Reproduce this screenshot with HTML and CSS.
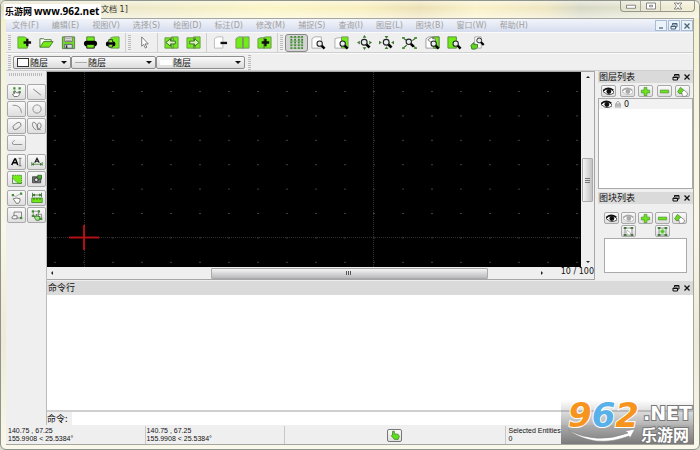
FILE: index.html
```html
<!DOCTYPE html>
<html lang="zh-CN">
<head>
  <meta charset="UTF-8">
  <meta name="viewport" content="width=device-width, initial-scale=1.0">
  <title>文档 1</title>
  <link rel="stylesheet" href="styles.css">
</head>
<body>
  <svg class="sprite" aria-hidden="true">
    <symbol id="lens" viewBox="0 0 16 16"><path d="M9.500 9.500L14 14" stroke="#000" stroke-width="3.500"/><circle cx="7" cy="7" r="3.800" fill="#e8eef0" stroke="#222" stroke-width="1.500"/></symbol>
    <symbol id="new" viewBox="0 0 16 16"><path d="M1 2h7l3 2v10H1z" fill="#72ec16" stroke="#6a9a4a"/><path d="M7 8h8M11 4v8" stroke="#111" stroke-width="2.500"/></symbol>
    <symbol id="open" viewBox="0 0 16 16"><path d="M1 13V4h4l1 1h7v2" fill="#fff" stroke="#4d7a35"/><path d="M1 13l4-6h10l-4 6z" fill="#72ec16" stroke="#4d7a35"/></symbol>
    <symbol id="save" viewBox="0 0 16 16"><path d="M1.500 2h13v12.500h-13z" fill="#72d827" stroke="#5d7d4d"/><path d="M4 2h8v5H4z" fill="#eee" stroke="#777"/><path d="M5 4h6M5 6h6" stroke="#999"/><path d="M4 10h8v4H4z" fill="#ddd" stroke="#567"/><path d="M6 11v3" stroke="#333" stroke-width="1.500"/></symbol>
    <symbol id="print" viewBox="0 0 16 16"><path d="M4 2h8v5H4z" fill="#72ec16" stroke="#4d7a35"/><rect x="1" y="6" width="14" height="6" rx="3"/><path d="M4 10h8v4H4z" fill="#72ec16" stroke="#111"/></symbol>
    <symbol id="preview" viewBox="0 0 16 16"><path d="M6 3l3-1h6v12H6z" fill="#72ec16" stroke="#789966"/><rect x="1" y="7" width="10" height="5" rx="2"/><path d="M4 5h4v3H4zM4 10h4v3H4z" fill="#8e3" stroke="#333"/></symbol>
    <symbol id="cursor" viewBox="0 0 16 16"><path d="M5 2v10l2-2 2 4 1.500-1-2-3.500H12z" fill="#fff" stroke="#777"/></symbol>
    <symbol id="undo" viewBox="0 0 16 16"><path d="M1 3h9v11H1zM8 2h7v12H8z" fill="#72ec16" stroke="#699650"/><path d="M2 8l5-4v2.500h5v3H7V12z" fill="#d8f5b8" stroke="#3f6630"/></symbol>
    <symbol id="redo" viewBox="0 0 16 16"><path d="M1 3h9v11H1zM8 2h7v12H8z" fill="#72ec16" stroke="#699650"/><path d="M14 8L9 4v2.500H4v3h5V12z" fill="#d8f5b8" stroke="#3f6630"/></symbol>
    <symbol id="cut" viewBox="0 0 16 16"><path d="M1.500 4l3-2h6v12h-9z" fill="#fff" stroke="#bbb"/><path d="M8 8.500h7" stroke="#111" stroke-width="2.500"/></symbol>
    <symbol id="copy" viewBox="0 0 16 16"><path d="M1 4l3-2h5v12H1zM8 3l2-1h5v12H8z" fill="#72ec16" stroke="#799666"/></symbol>
    <symbol id="paste" viewBox="0 0 16 16"><path d="M1 4l3-1h4v11H1zM7 3l2-1h6v12H7z" fill="#72ec16" stroke="#699650"/><path d="M5 8h8M9 4v8" stroke="#111" stroke-width="2.500"/></symbol>
    <symbol id="grid" viewBox="0 0 16 16"><path d="M2.500 1v14M6.500 1v14M10.500 1v14M14 1v14" stroke="#43853a" stroke-width="2" stroke-dasharray="2 1"/><path d="M1 2.500h14M1 6.500h14M1 10.500h14M1 14h14" stroke="#5ea34c" stroke-width=".7"/></symbol>
    <symbol id="redraw" viewBox="0 0 16 16"><path d="M1 4l3-2h7v12H1z" fill="#fff" stroke="#aaa"/><use href="#lens" x="4" y="4" width="12" height="12"/></symbol>
    <symbol id="zoomwin" viewBox="0 0 16 16"><path d="M1 4l3-1h4v11H1z" fill="#fff" stroke="#aaa"/><path d="M8 2h7v12H8z" fill="#72ec16" stroke="#799666"/><use href="#lens" x="4" y="4" width="12" height="12"/></symbol>
    <symbol id="zoomin" viewBox="0 0 16 16"><path d="M8 0l2 3H6zM8 16l2-3H6zM0 8l3-2v4zM16 8l-3-2v4z" fill="#3d7d30"/><use href="#lens" x="2" y="2" width="13" height="13"/></symbol>
    <symbol id="zoomout" viewBox="0 0 16 16"><path d="M6 1h4L8 4zM6 15h4l-2-3zM0 6v4l3-2zM16 6v4l-3-2z" fill="#3d7d30"/><use href="#lens" x="2" y="2" width="13" height="13"/></symbol>
    <symbol id="zoomauto" viewBox="0 0 16 16"><path d="M1 3l4 3M15 3l-4 3M1 14l4-3M15 14l-4-3" stroke="#36642c" stroke-width="1.200"/><path d="M0 3h3M13 3h3M0 14h3M13 14h3" stroke="#4b923a" stroke-width="2"/><use href="#lens" x="2" y="2" width="12" height="12"/></symbol>
    <symbol id="zoomprev" viewBox="0 0 16 16"><path d="M1 4l3-2h11v12H1z" fill="#fff" stroke="#999"/><path d="M9 2h6v12H9z" fill="#72ec16" stroke="#567d42"/><path d="M3 5l5-3v2h3v3H8v2z" fill="#fff" stroke="#777"/><use href="#lens" x="4" y="4" width="12" height="12"/></symbol>
    <symbol id="zoomsel" viewBox="0 0 16 16"><path d="M1 2h9v12H1z" fill="#72ec16" stroke="#5c8b40"/><use href="#lens" x="4" y="4" width="12" height="12"/></symbol>
    <symbol id="zoompan" viewBox="0 0 16 16"><path d="M5 2h7v12H5z" fill="#fff" stroke="#aaa"/><path d="M1 11l3-3v2h4v3l-2 2H2z" fill="#61d51a" stroke="#3c792b"/><use href="#lens" x="5" y="1" width="11" height="11"/></symbol>
    <symbol id="points" viewBox="0 0 16 16"><path d="M3 3h3M10 3h3M10 8h3M3 8h2" stroke="#438f35" stroke-width="3"/><path d="M4 14l-2-3 3-1V6l2 3h4v3l-2 2z" fill="#fff" stroke="#555"/></symbol>
    <symbol id="line" viewBox="0 0 16 16"><path d="M3 4l10 8" stroke="#777" stroke-width="1.200"/></symbol>
    <symbol id="arc" viewBox="0 0 16 16"><path d="M2 3q11-1 12 10" fill="none" stroke="#777"/></symbol>
    <symbol id="circle" viewBox="0 0 16 16"><circle cx="8" cy="8" r="5.500" fill="none" stroke="#777"/></symbol>
    <symbol id="ellipse" viewBox="0 0 16 16"><ellipse cx="8" cy="8" rx="6" ry="3.500" transform="rotate(-35 8 8)" fill="none" stroke="#666"/></symbol>
    <symbol id="spline" viewBox="0 0 16 16"><path d="M7 13C2 12 0 2 4 3s4 7 5 10c5-1 6-9 2-9S8 13 13 13" fill="none" stroke="#666"/></symbol>
    <symbol id="polyline" viewBox="0 0 16 16"><path d="M5 4L2 7q-1 3 2 3h11" fill="none" stroke="#777"/></symbol>
    <symbol id="text" viewBox="0 0 16 16"><path d="M1 12L5 4h1l3 8M3 9h5" fill="none" stroke="#000" stroke-width="2"/><path d="M10 3h4M12 3v10M10 13h4" stroke="#555"/></symbol>
    <symbol id="dim" viewBox="0 0 16 16"><path d="M5 9l3-6 3 6M6 7h4" fill="none" stroke="#111" stroke-width="1.500"/><path d="M1 8v5M15 8v5M1 11h14" stroke="#3d7531"/><path d="M1 11l3-2v4zM15 11l-3-2v4z" fill="#3d7531"/></symbol>
    <symbol id="hatch" viewBox="0 0 16 16"><path d="M2 3h12v11q-7 0-12-8z" fill="#72ec16" stroke="#3b752d" stroke-dasharray="2 1"/><path d="M2 6v8h12" fill="none" stroke="#3b752d"/></symbol>
    <symbol id="image" viewBox="0 0 16 16"><path d="M2 5h11v8H2z" fill="#777" stroke="#333"/><circle cx="7" cy="9" r="2.500" fill="#ddd" stroke="#111"/><path d="M9 3h5v5H9z" fill="#55a63b" stroke="#245c1b"/></symbol>
    <symbol id="modify" viewBox="0 0 16 16"><path d="M2 4l4 2 7-4" fill="none" stroke="#999"/><path d="M1 4h3M12 2h3" stroke="#438f35" stroke-width="3"/><path d="M5 12l-2-3 4-1 5 1v3l-2 3H7z" fill="#fff" stroke="#555"/></symbol>
    <symbol id="measure" viewBox="0 0 16 16"><path d="M2 1v6M14 1v6M2 4h12" stroke="#28601d"/><path d="M2 4l3-2v4zM14 4l-3-2v4z" fill="#28601d"/><path d="M1 8h14v6H1z" fill="#72ec16" stroke="#3e7b2a"/><path d="M4 8v3M8 8v3M12 8v3" stroke="#2d5a22"/></symbol>
    <symbol id="block" viewBox="0 0 16 16"><path d="M4 10V4h10v8H8" fill="none" stroke="#666"/><path d="M12 12h3" stroke="#438f35" stroke-width="3"/><path d="M1 12l2-3h5v4H3z" fill="#fff" stroke="#555"/></symbol>
    <symbol id="select" viewBox="0 0 16 16"><path d="M3 3h7v7H3zM8 7h6v6H8" fill="none" stroke="#777"/><path d="M1 3h3M9 3h3M1 9h3M12 13h3" stroke="#438f35" stroke-width="3"/><path d="M5 12l-1-3 3 1V7l2 3h3l-1 5H7z" fill="#9e7" stroke="#345b2a"/></symbol>
    <symbol id="eye" viewBox="0 0 16 16"><path d="M0 8q7-7 15-1l1 3q-8 5-13 0z" fill="#fff" stroke="currentColor"/><path d="M0 7q7-7 15-1" fill="none" stroke="currentColor" stroke-width="2"/><circle cx="8.500" cy="8" r="3.500" fill="currentColor"/></symbol>
    <symbol id="plus" viewBox="0 0 16 16"><path d="M6 2h4v4h4v4h-4v4H6v-4H2V6h4z" fill="#6ce51b" stroke="#498f2c"/></symbol>
    <symbol id="minus" viewBox="0 0 16 16"><path d="M2 6h12v4H2z" fill="#6ce51b" stroke="#498f2c"/></symbol>
    <symbol id="edit" viewBox="0 0 16 16"><path d="M1 8l4-6 5 4-2 5H3z" fill="#66d91f" stroke="#427e2a"/><path d="M7 9l3-3 5 4v3l-3 2H8z" fill="#fff" stroke="#777"/></symbol>
    <symbol id="blockedit" viewBox="0 0 16 16"><path d="M3 3h10v10H3z" fill="#fff" stroke="#666"/><path d="M1 3h4M11 3h4M1 13h4M11 13h4" stroke="#47783d" stroke-width="3"/><path d="M5 10l1-4 5 4v3H8z" fill="#fff" stroke="#999"/></symbol>
    <symbol id="blockinsert" viewBox="0 0 16 16"><path d="M3 3h10v10H3z" fill="#dfd" stroke="#666"/><path d="M1 3h4M11 3h4M1 13h4M11 13h4" stroke="#47783d" stroke-width="3"/><path d="M5 8h6M8 5v6" stroke="#59bd2b" stroke-width="3"/></symbol>
    <symbol id="lock" viewBox="0 0 16 16"><path d="M5 8V5q3-5 6 0v3" fill="none" stroke="#aaa" stroke-width="2"/><path d="M2 7h12v8H2z" fill="#aaa"/><path d="M3 10h10M3 13h10" stroke="#ddd"/></symbol>
    <symbol id="hand" viewBox="0 0 16 16"><path d="M4 8V2h3v4l6 1 2 3-2 5H7L2 9z" fill="#5ee01a" stroke="#326d24"/></symbol>
    <symbol id="float" viewBox="0 0 16 16"><path d="M5 6V3h9v7h-3M5 4h9" fill="none" stroke="currentColor" stroke-width="2"/><path d="M2 8h9v6H2zM2 9h9" fill="none" stroke="currentColor" stroke-width="2"/></symbol>
    <symbol id="close" viewBox="0 0 16 16"><path d="M3 3l10 10M13 3L3 13" stroke="currentColor" stroke-width="2.500"/></symbol>
    <symbol id="min" viewBox="0 0 16 16"><path d="M4 12h8" stroke="currentColor" stroke-width="2.500"/></symbol>
  </svg>

  <div class="window">
    <header class="titlebar">
      <h1>文档 1]</h1>
      <div class="win-buttons">
        <button aria-label="最小化"><svg viewBox="0 0 16 10"><path d="M2 4h12v4H2z" fill="#fff" stroke="#666"/></svg></button>
        <button aria-label="最大化"><svg viewBox="0 0 16 10"><path d="M2 1h12v8H2zM6 4h4v2H6z" fill="#fff" stroke="#666"/></svg></button>
        <button class="win-close" aria-label="关闭"><svg viewBox="0 0 16 10"><path d="M3 1h4l1 2 1-2h4l-3 4 3 4H9L8 7 7 9H3l3-4z" fill="#fff" stroke="#666"/></svg></button>
      </div>
    </header>

    <div class="client">
      <nav class="menubar">
        <a href="#">文件(F)</a><a href="#">编辑(E)</a><a href="#">视图(V)</a><a href="#">选择(S)</a><a href="#">绘图(D)</a><a href="#">标注(D)</a><a href="#">修改(M)</a><a href="#">捕捉(S)</a><a href="#">查询(I)</a><a href="#">图层(L)</a><a href="#">图块(B)</a><a href="#">窗口(W)</a><a href="#">帮助(H)</a>
        <div class="mdi">
          <button aria-label="最小化"><svg><use href="#min"/></svg></button>
          <button aria-label="还原"><svg><use href="#float"/></svg></button>
          <button aria-label="关闭"><svg><use href="#close"/></svg></button>
        </div>
      </nav>

      <div class="toolbar main-tools">
        <span class="grip"></span>
        <button aria-label="新建"><svg><use href="#new"/></svg></button>
        <button aria-label="打开"><svg><use href="#open"/></svg></button>
        <button aria-label="保存"><svg><use href="#save"/></svg></button>
        <button aria-label="打印"><svg><use href="#print"/></svg></button>
        <button aria-label="打印预览"><svg><use href="#preview"/></svg></button>
        <span class="sep"></span>
        <span class="grip"></span>
        <button aria-label="选择"><svg><use href="#cursor"/></svg></button>
        <span class="sep"></span>
        <button aria-label="撤销"><svg><use href="#undo"/></svg></button>
        <button aria-label="重做"><svg><use href="#redo"/></svg></button>
        <span class="sep"></span>
        <button aria-label="剪切"><svg><use href="#cut"/></svg></button>
        <button aria-label="复制"><svg><use href="#copy"/></svg></button>
        <button aria-label="粘贴"><svg><use href="#paste"/></svg></button>
        <span class="sep"></span>
        <span class="grip"></span>
        <div class="view-tools">
          <button class="pressed" aria-label="网格"><svg><use href="#grid"/></svg></button>
          <button aria-label="重画"><svg><use href="#redraw"/></svg></button>
          <button aria-label="窗口缩放"><svg><use href="#zoomwin"/></svg></button>
          <button aria-label="放大"><svg><use href="#zoomin"/></svg></button>
          <button aria-label="缩小"><svg><use href="#zoomout"/></svg></button>
          <button aria-label="自动缩放"><svg><use href="#zoomauto"/></svg></button>
          <button aria-label="上一视图"><svg><use href="#zoomprev"/></svg></button>
          <button aria-label="缩放选择"><svg><use href="#zoomsel"/></svg></button>
          <button aria-label="平移"><svg><use href="#zoompan"/></svg></button>
        </div>
      </div>

      <div class="toolbar pen-tools">
        <span class="grip"></span>
        <label class="combo combo-color"><span class="swatch box"></span><select aria-label="颜色"><option>随层</option></select><i class="arrow"></i></label>
        <label class="combo combo-width"><span class="swatch rule"></span><select aria-label="线宽"><option>随层</option></select><i class="arrow"></i></label>
        <label class="combo combo-type"><span class="swatch blank"></span><select aria-label="线型"><option>随层</option></select><i class="arrow"></i></label>
        <span class="grip"></span>
      </div>

      <div class="work">
        <aside class="toolbox">
          <div class="grip-h"></div>
          <div class="tools">
            <button aria-label="点"><svg><use href="#points"/></svg></button>
            <button aria-label="直线"><svg><use href="#line"/></svg></button>
            <button aria-label="圆弧"><svg><use href="#arc"/></svg></button>
            <button aria-label="圆"><svg><use href="#circle"/></svg></button>
            <button aria-label="椭圆"><svg><use href="#ellipse"/></svg></button>
            <button aria-label="样条"><svg><use href="#spline"/></svg></button>
            <button aria-label="多段线"><svg><use href="#polyline"/></svg></button>
          </div>
          <div class="tools">
            <button aria-label="文字"><svg><use href="#text"/></svg></button>
            <button aria-label="标注"><svg><use href="#dim"/></svg></button>
            <button aria-label="填充"><svg><use href="#hatch"/></svg></button>
            <button aria-label="图像"><svg><use href="#image"/></svg></button>
          </div>
          <div class="tools">
            <button aria-label="修改"><svg><use href="#modify"/></svg></button>
            <button aria-label="测量"><svg><use href="#measure"/></svg></button>
            <button aria-label="图块"><svg><use href="#block"/></svg></button>
            <button aria-label="选择工具"><svg><use href="#select"/></svg></button>
          </div>
        </aside>

        <div class="center">
          <div class="upper">
            <main class="drawing">
              <svg class="canvas" aria-label="绘图区">
                <defs>
                  <pattern id="dots" x="7" y="19" width="29" height="24.400" patternUnits="userSpaceOnUse"><rect width="2" height="1" fill="#404040"/></pattern>
                </defs>
                <rect width="100%" height="100%" fill="url(#dots)"/>
                <path class="axes" d="M37.500 0v400M326.500 0v400M0 165.500h1600"/>
                <path class="cross" d="M22 165.500h30M37 153v25"/>
              </svg>
              <div class="vscroll"><i class="tri up"></i><span class="thumb"></span><i class="tri down"></i></div>
              <div class="bottom">
                <div class="hscroll"><i class="tri left"></i><span class="thumb"></span><i class="tri right"></i></div>
                <span class="ratio">10 / 100</span>
              </div>
            </main>

            <aside class="docks">
              <section class="dock">
                <h2 class="dock-title">图层列表<button aria-label="浮动"><svg><use href="#float"/></svg></button><button aria-label="关闭"><svg><use href="#close"/></svg></button></h2>
                <div class="dock-tools layer-tools">
                  <button aria-label="全部显示"><svg><use href="#eye"/></svg></button>
                  <button class="dim" aria-label="全部隐藏"><svg><use href="#eye"/></svg></button>
                  <button aria-label="添加图层"><svg><use href="#plus"/></svg></button>
                  <button aria-label="删除图层"><svg><use href="#minus"/></svg></button>
                  <button aria-label="编辑图层"><svg><use href="#edit"/></svg></button>
                </div>
                <ul class="layers">
                  <li><svg class="vis"><use href="#eye"/></svg><svg class="lock"><use href="#lock"/></svg>0</li>
                </ul>
              </section>
              <section class="dock">
                <h2 class="dock-title">图块列表<button aria-label="浮动"><svg><use href="#float"/></svg></button><button aria-label="关闭"><svg><use href="#close"/></svg></button></h2>
                <div class="dock-tools block-tools">
                  <button aria-label="全部显示"><svg><use href="#eye"/></svg></button>
                  <button class="dim" aria-label="全部隐藏"><svg><use href="#eye"/></svg></button>
                  <button aria-label="添加图块"><svg><use href="#plus"/></svg></button>
                  <button aria-label="删除图块"><svg><use href="#minus"/></svg></button>
                  <button aria-label="重命名图块"><svg><use href="#edit"/></svg></button>
                  <button class="col2" aria-label="编辑图块"><svg><use href="#blockedit"/></svg></button>
                  <button class="col4" aria-label="插入图块"><svg><use href="#blockinsert"/></svg></button>
                </div>
                <div class="blocks"></div>
              </section>
            </aside>
          </div>

          <section class="command">
            <h2 class="dock-title">命令行<button aria-label="浮动"><svg><use href="#float"/></svg></button><button aria-label="关闭"><svg><use href="#close"/></svg></button></h2>
            <div class="history"></div>
            <div class="prompt"><label for="cmd">命令:</label><input id="cmd" type="text"></div>
          </section>
        </div>
      </div>

      <footer class="status">
        <p>140.75 , 67.25<br>155.9908 &lt; 25.5384°</p>
        <p>140.75 , 67.25<br>155.9908 &lt; 25.5384°</p>
        <div class="mouse"><button aria-label="鼠标"><svg><use href="#hand"/></svg></button></div>
        <p>Selected Entities<br>0</p>
      </footer>
    </div>

    <div class="site-label">乐游网 <b>www.962.net</b></div>
    <div class="site-logo">
      <svg class="swoosh" viewBox="0 0 133 44"><path d="M7 30q28 15 60 3l-3-2 10-2-5 9-1-2Q34 49 7 30z" fill="#fff" stroke="#888" stroke-width=".6"/></svg>
      <span class="num"><i>9</i><i class="blue">6</i><i>2</i></span>
      <span class="net">.NET</span>
      <span class="cn">乐游网</span>
    </div>
  </div>
</body>
</html>
```

FILE: styles.css
```css
* {
  box-sizing: border-box;
}
body {
  margin: 0;
  height: 100vh;
  overflow: hidden;
  background: #d9d9cf;
  font-family: "DejaVu Sans", "Noto Sans CJK SC", sans-serif;
  font-size: 8px;
  color: #111;
}
button {
  display: flex;
  align-items: center;
  justify-content: center;
  padding: 0;
  margin: 0;
  border: none;
  background: none;
  color: inherit;
}
h1, h2, p, ul {
  margin: 0;
  padding: 0;
  font-weight: normal;
}
.sprite {
  position: absolute;
  width: 0;
  height: 0;
}
.window {
  position: relative;
  height: 100%;
  display: flex;
  flex-direction: column;
  padding: 0 5px 4px;
  border: 1px solid #8f948c;
  border-radius: 6px;
  background: linear-gradient(to bottom, #f5f0cc, #f6f3de 18%, #fbf7e8 50%, #eee9d8 75%, #faf8ea);
}
.titlebar {
  display: flex;
  justify-content: space-between;
  height: 17px;
  margin: 0 -5px;
  padding-left: 100px;
  border-radius: 5px 5px 0 0;
  background: linear-gradient(to bottom, rgba(255, 255, 255, 0.5), rgba(255, 255, 255, 0) 40%, rgba(255, 255, 255, 0.5)), linear-gradient(to right, #e2e0c8, #eee9c8 20%, #fbf5c5 38%, #f8efbe 52%, #ece0b4 60%, #faf2c8 68%, #efe6c0 78%, #d6d8c4 83%, #e3e2cd 90%, #f4efd4);
}
.titlebar h1 {
  font-size: 8px;
  line-height: 17px;
  color: #333;
}
.win-buttons {
  display: flex;
  height: 11px;
  margin-right: 4px;
  border: 1px solid #96978b;
  border-top: none;
  border-radius: 0 0 4px 4px;
}
.win-buttons button {
  width: 20px;
  border-right: 1px solid #a9aa9d;
}
.win-buttons .win-close {
  width: 33px;
  border: none;
}
.win-buttons svg {
  width: 12px;
  height: 8px;
}
.client {
  flex: 1;
  min-height: 0;
  display: flex;
  flex-direction: column;
  border: 1px solid #a5a69d;
  border-left: none;
  background: #efefef;
}
.menubar {
  display: flex;
  align-items: center;
  gap: 13px;
  height: 13px;
  padding-left: 6px;
  background: linear-gradient(to bottom, #f2f5fa, #d5dcee);
}
.menubar a {
  color: #a0a0a0;
  text-decoration: none;
  line-height: 12px;
  white-space: nowrap;
}
.mdi {
  display: flex;
  gap: 1px;
  margin-left: auto;
}
.mdi button {
  width: 12px;
  height: 11px;
  border: 1px solid #a8bdd3;
  background: #eaf2fa;
  color: #4b6174;
}
.mdi svg {
  width: 8px;
  height: 8px;
}
.toolbar {
  display: flex;
  align-items: center;
  border-top: 1px solid #fafafa;
  border-bottom: 1px solid #cfcfcf;
}
.main-tools {
  height: 21px;
  padding-left: 2px;
}
.main-tools button {
  width: 22px;
  height: 18px;
}
.main-tools svg {
  width: 15px;
  height: 15px;
}
.grip {
  width: 3px;
  height: 15px;
  margin-right: 2px;
  background: repeating-linear-gradient(to bottom, #bbb 0, #bbb 1px, transparent 1px, transparent 2px);
}
.sep {
  width: 1px;
  height: 20px;
  margin: 0 2px;
  background: #cfcfcf;
}
.view-tools {
  display: grid;
  grid-template-columns: repeat(9, 1fr);
  width: 204px;
}
.view-tools button {
  width: auto;
}
.view-tools .pressed {
  border: 1px solid #888;
  border-radius: 3px;
  background: #d4d4d4;
}
.pen-tools {
  height: 18px;
  padding-left: 2px;
}
.combo {
  display: flex;
  align-items: center;
  height: 13px;
  padding: 0 3px;
  border: 1px solid #8e8e8e;
  border-radius: 2px;
  background: linear-gradient(to bottom, #fafafa, #dcdcdc);
}
.combo-color {
  width: 58px;
}
.combo-width {
  width: 85px;
}
.combo-type {
  width: 89px;
}
.combo select {
  flex: 1;
  min-width: 0;
  height: 11px;
  padding: 0 0 0 1px;
  border: none;
  appearance: none;
  background: none;
  font: 9px/11px "Noto Sans CJK SC", sans-serif;
  color: #111;
}
.swatch {
  width: 12px;
}
.swatch.box {
  height: 9px;
  border: 1px solid #333;
  background: #fff;
}
.swatch.rule {
  height: 1px;
  background: #aaa;
}
.swatch.blank {
  height: 5px;
  background: #fff;
}
.arrow {
  border: 3px solid transparent;
  border-top-color: #111;
  border-bottom: none;
}
.pen-tools .combo + .grip {
  margin-left: 3px;
}
.work {
  flex: 1;
  min-height: 0;
  display: flex;
}
.toolbox {
  width: 41px;
  padding: 2px 1px;
  border-right: 1px solid #bcbcbc;
}
.grip-h {
  height: 3px;
  margin: 0 2px 8px;
  background: repeating-linear-gradient(to right, #bbb 0, #bbb 1px, transparent 1px, transparent 2px);
}
.tools {
  display: grid;
  grid-template-columns: 19px 19px;
  gap: 1px;
  margin-bottom: 3px;
}
.tools button,
.dock-tools button,
.mouse button {
  border: 1px solid #a9a9a9;
  border-radius: 2px;
  background: linear-gradient(to bottom, #fafafa, #dedede);
}
.tools button {
  height: 16px;
}
.tools svg {
  width: 12px;
  height: 12px;
}
.center {
  flex: 1;
  min-width: 0;
  display: flex;
  flex-direction: column;
}
.upper {
  display: flex;
  height: 209px;
}
.drawing {
  flex: 1;
  min-width: 0;
  display: grid;
  grid-template-columns: 1fr 13px;
  grid-template-rows: 1fr 12px;
  border: 1px solid #a6a6a6;
  border-left: none;
}
.canvas {
  width: 100%;
  height: 100%;
  background: #000;
}
.axes {
  fill: none;
  stroke: #303030;
  stroke-dasharray: 1 1;
}
.cross {
  fill: none;
  stroke: #d81016;
  stroke-width: 2;
  stroke-opacity: 0.8;
}
.vscroll {
  display: flex;
  flex-direction: column;
  align-items: center;
  padding: 4px 0;
  background: #efefef;
}
.vscroll .thumb {
  width: 11px;
  height: 44px;
  margin: 80px 0 auto;
  border: 1px solid #aaa;
  border-radius: 1px;
  background: repeating-linear-gradient(to bottom, #777 0, #777 1px, transparent 1px, transparent 2px) center / 5px 5px no-repeat, linear-gradient(to right, #f5f5f5, #c2c2c2);
}
.bottom {
  grid-column: 1 / -1;
  display: flex;
}
.hscroll {
  flex: 1;
  display: flex;
  align-items: center;
  padding: 0 18px 0 4px;
}
.hscroll .thumb {
  width: 277px;
  height: 11px;
  margin: 0 53px 0 auto;
  border: 1px solid #aaa;
  border-radius: 1px;
  background: repeating-linear-gradient(to right, #555 0, #555 1px, transparent 1px, transparent 2px) center / 6px 4px no-repeat, linear-gradient(to bottom, #f5f5f5, #b9b9bd);
}
.tri {
  border: 2px solid transparent;
}
.up {
  border-bottom-color: #222;
  border-top: none;
}
.down {
  border-top-color: #222;
  border-bottom: none;
}
.left {
  border-right-color: #222;
  border-left: none;
}
.right {
  border-left-color: #222;
  border-right: none;
}
.ratio {
  line-height: 10px;
}
.docks {
  width: 98px;
  padding-left: 3px;
}
.dock + .dock {
  margin-top: 3px;
}
.dock-title {
  display: flex;
  align-items: center;
  gap: 3px;
  height: 12px;
  padding: 0 2px 0 1px;
  background: #dadada;
  font: 9px/12px "Noto Sans CJK SC", sans-serif;
}
.dock-title button:first-of-type {
  margin-left: auto;
}
.dock-title svg {
  width: 8px;
  height: 8px;
}
.dock-tools button {
  width: 15px;
  height: 12px;
}
.dock-tools svg {
  width: 11px;
  height: 11px;
}
.dock-tools .dim {
  color: #aaa;
}
.layer-tools {
  display: flex;
  justify-content: space-between;
  padding: 2px 3px 1px;
}
.layers {
  height: 91px;
  border: 1px solid #aaa;
  background: #fff;
  list-style: none;
}
.layers li {
  display: flex;
  align-items: center;
  gap: 2px;
  height: 10px;
  padding-left: 2px;
  background: #f2f2f2;
}
.layers .vis {
  width: 11px;
  height: 11px;
}
.layers .lock {
  width: 8px;
  height: 8px;
}
.block-tools {
  display: grid;
  grid-template-columns: repeat(5, 15px);
  justify-content: center;
  gap: 1px 2px;
  padding: 8px 0 0;
}
.block-tools .col2 {
  grid-column: 2;
}
.block-tools .col4 {
  grid-column: 4;
}
.blocks {
  height: 35px;
  margin: 1px 6px 0;
  border: 1px solid #aaa;
  background: #fff;
}
.command {
  flex: 1;
  min-height: 0;
  display: flex;
  flex-direction: column;
  padding-top: 1px;
}
.command .dock-title {
  height: 14px;
}
.history {
  flex: 1;
  border-bottom: 2px solid #cfcfcf;
  background: #fff;
}
.prompt {
  display: flex;
  height: 13px;
}
.prompt label {
  width: 25px;
  font: 9px/13px "Noto Sans CJK SC", sans-serif;
}
.prompt input {
  flex: 1;
  min-width: 0;
  padding: 0 2px;
  border: none;
  background: #fff;
  font: inherit;
}
.status {
  display: grid;
  grid-template-columns: 139fr 140fr 221fr 189fr;
  height: 19px;
  padding: 1px 0;
  font: 7px/8px "Liberation Sans", sans-serif;
}
.status > * {
  padding: 1px;
  border-left: 1px solid #c8c8c8;
}
.status > :first-child {
  border-left-color: transparent;
}
.status > :last-child {
  padding-left: 3px;
}
.mouse {
  display: flex;
  align-items: center;
  justify-content: center;
}
.mouse button {
  width: 15px;
  height: 13px;
  border-color: #777;
}
.mouse svg {
  width: 10px;
  height: 10px;
}
.site-label {
  position: absolute;
  left: 3px;
  top: 3px;
  padding: 0 2px 0 1px;
  background: #fff;
  font: bold 9px/15px "Noto Sans CJK SC", sans-serif;
  color: #000;
  white-space: nowrap;
}
.site-label b {
  font: bold 10px/15px "Open Sans", sans-serif;
}
.site-logo {
  position: absolute;
  right: 5px;
  bottom: 5px;
  width: 133px;
  height: 44px;
  background: linear-gradient(to bottom, rgba(255, 255, 255, 0), rgba(110, 110, 110, 0.9));
}
.site-logo span {
  position: absolute;
  line-height: 1;
  font-weight: bold;
  white-space: nowrap;
  color: #fff;
  paint-order: stroke fill;
}
.swoosh {
  position: absolute;
  left: 0;
  top: 0;
  width: 133px;
  height: 44px;
}
.site-logo .num {
  left: 7px;
  top: -2px;
  font-family: "DejaVu Sans", sans-serif;
  font-size: 34px;
  color: #f7941e;
  -webkit-text-stroke: 2px #fff;
}
.num .blue {
  color: #5ab0e8;
}
.site-logo .net {
  right: 2px;
  top: 4px;
  font-family: "DejaVu Sans", sans-serif;
  font-size: 19px;
  -webkit-text-stroke: 2px #777;
}
.site-logo .cn {
  right: 5px;
  bottom: 2px;
  font-family: "Noto Sans CJK SC", sans-serif;
  font-size: 16px;
  -webkit-text-stroke: 2px #777;
}
```
